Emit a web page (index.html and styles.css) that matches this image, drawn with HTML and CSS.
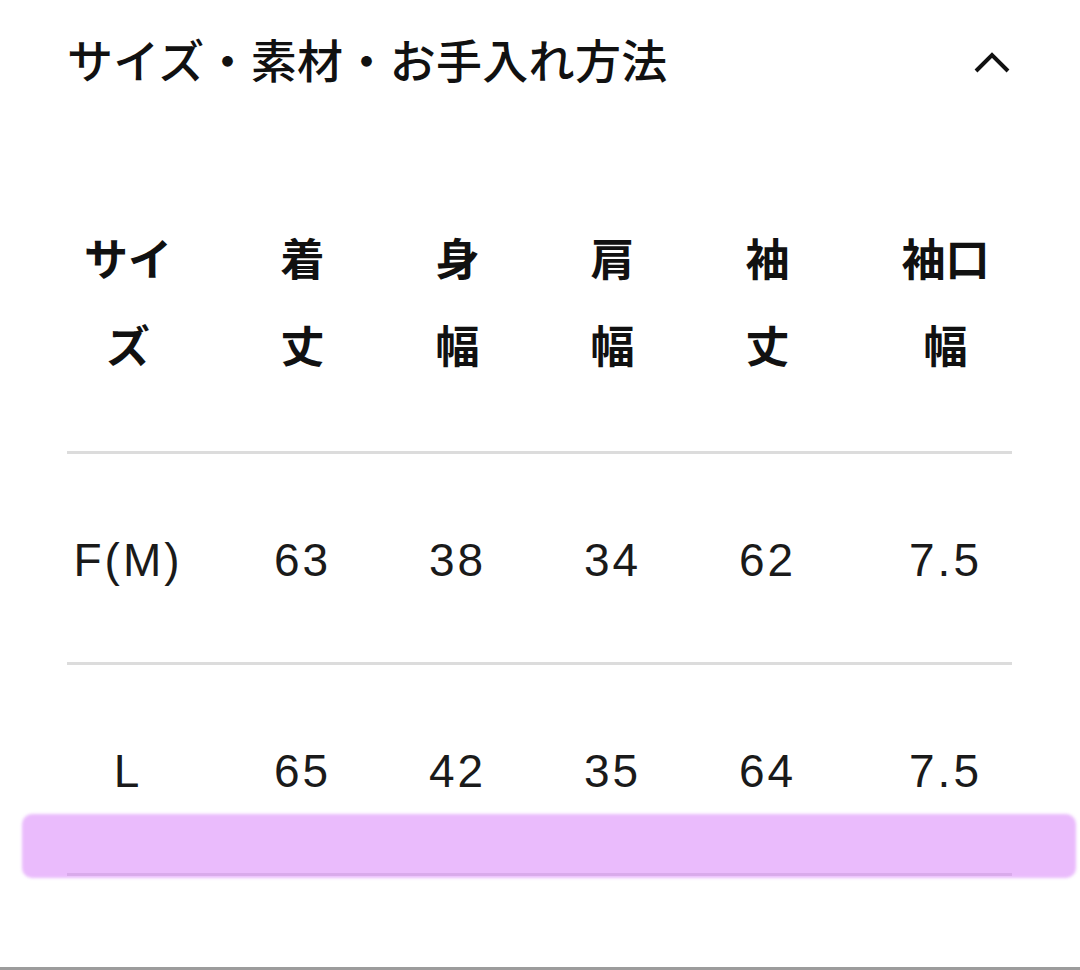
FILE: index.html
```html
<!DOCTYPE html>
<html lang="ja">
<head>
<meta charset="utf-8">
<link rel="stylesheet" href="styles.css">
</head>
<body>
<div class="page">
  <div class="section-head">
    <h2 class="section-title">サイズ・素材・お手入れ方法</h2>
    <svg class="chevron" width="36" height="22" viewBox="0 0 36 22"><polyline points="2,20 18,4 34,20" fill="none" stroke="#111" stroke-width="4" stroke-linecap="butt" stroke-linejoin="miter"/></svg>
  </div>
  <div class="size-table">
    <div class="row head">
      <div class="cell first">サイ<br>ズ</div>
      <div class="cell">着<br>丈</div>
      <div class="cell">身<br>幅</div>
      <div class="cell">肩<br>幅</div>
      <div class="cell">袖<br>丈</div>
      <div class="cell last">袖口<br>幅</div>
    </div>
    <div class="row data">
      <div class="cell first">F(M)</div>
      <div class="cell">63</div>
      <div class="cell">38</div>
      <div class="cell">34</div>
      <div class="cell">62</div>
      <div class="cell last">7.5</div>
    </div>
    <div class="row data">
      <div class="cell first">L</div>
      <div class="cell">65</div>
      <div class="cell">42</div>
      <div class="cell">35</div>
      <div class="cell">64</div>
      <div class="cell last">7.5</div>
    </div>
    <div class="highlight"></div>
  </div>
  <div class="next-section"></div>
</div>
</body>
</html>
```
FILE: styles.css
```css
html, body {
  margin: 0;
  padding: 0;
  background: #ffffff;
}
.page {
  width: 1080px;
  height: 970px;
  overflow: hidden;
  color: #111111;
  font-family: "Noto Sans CJK JP", "Noto Sans", sans-serif;
}
.section-head {
  height: 128px;
  padding: 0 70px 0 67px;
  display: flex;
  align-items: center;
  justify-content: space-between;
}
.section-title {
  margin: 0;
  padding-bottom: 12px;
  font-size: 46px;
  font-weight: 500;
  line-height: 1;
  letter-spacing: 0.3px;
}
.chevron {
  display: block;
  margin-bottom: 4px;
}
.size-table {
  position: relative;
  margin: 0 68px 0 67px;
}
.row {
  display: grid;
  grid-template-columns: 158px repeat(4, 155px) 1fr;
  border-bottom: 3px solid #dcdcdc;
}
.cell {
  text-align: center;
}
.cell.first {
  padding-right: 36px;
}
.cell.last {
  padding-left: 34px;
}
.row.head {
  padding: 86px 0 63px;
  font-size: 44px;
  font-weight: 700;
  line-height: 87px;
}
.row.data {
  padding-top: 2px;
  box-sizing: border-box;
  height: 211px;
  font-family: "Liberation Sans", Arial, sans-serif;
  font-size: 46px;
  letter-spacing: 3px;
  line-height: 208px;
  color: #1a1a1a;
}
.highlight {
  position: absolute;
  left: -45px;
  right: -64px;
  bottom: -2px;
  height: 64px;
  border-radius: 10px;
  background: rgba(214, 120, 250, 0.5);
  filter: blur(1.5px);
}
.next-section {
  margin-top: 91px;
  border-top: 3px solid #9c9c9c;
}
```
